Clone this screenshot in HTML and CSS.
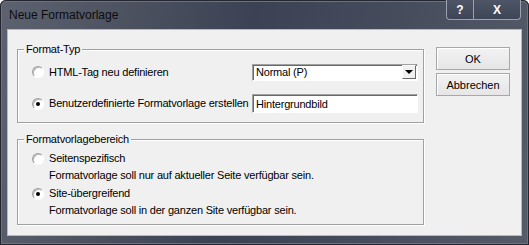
FILE: index.html
```html
<!DOCTYPE html>
<html lang="de">
<head>
  <meta charset="UTF-8">
  <title>Neue Formatvorlage</title>
  <link rel="stylesheet" href="styles.css">
</head>
<body>
  <div class="window">
    <div class="titlebar">
      <span class="title">Neue Formatvorlage</span>
      <div class="caption-btns">
        <span class="cap help">?</span>
        <span class="cap close">X</span>
      </div>
    </div>

    <div class="client">
      <div class="groups">
        <fieldset class="group">
          <legend>Format-Typ</legend>
          <div class="body type">
            <div class="row first">
              <label class="opt"><span class="radio"></span>HTML-Tag neu definieren</label>
              <div class="select"><span>Normal (P)</span><span class="arrow"></span></div>
            </div>
            <div class="row second">
              <label class="opt"><span class="radio checked"></span>Benutzerdefinierte Formatvorlage erstellen</label>
              <div class="textbox">Hintergrundbild</div>
            </div>
          </div>
        </fieldset>

        <fieldset class="group scope">
          <legend>Formatvorlagebereich</legend>
          <div class="body">
            <div class="choice">
              <label class="opt"><span class="radio"></span>Seitenspezifisch</label>
              <div class="desc">Formatvorlage soll nur auf aktueller Seite verfügbar sein.</div>
            </div>
            <div class="choice">
              <label class="opt"><span class="radio checked"></span>Site-übergreifend</label>
              <div class="desc">Formatvorlage soll in der ganzen Site verfügbar sein.</div>
            </div>
          </div>
        </fieldset>
      </div>

      <div class="buttons">
        <button class="btn">OK</button>
        <button class="btn">Abbrechen</button>
      </div>
    </div>
  </div>
</body>
</html>
```

FILE: styles.css
```css
body { margin: 0; font-family: "Liberation Sans", Arial, sans-serif; font-size: 11px; color: #000; overflow: hidden; }

.window { width: 529px; height: 245px; box-sizing: border-box; padding: 0 7px 9px 7px; display: flex; flex-direction: column;
  background: linear-gradient(100deg, #5d6270 0%, #4a505e 25%, #3a4254 45%, #454c5c 70%, #555b68 100%);
  box-shadow: inset 0 0 0 1px #23262e, inset 0 0 0 2px #6c727e; border-radius: 6px 6px 0 0; }

.titlebar { height: 29px; display: flex; justify-content: space-between; align-items: flex-start; }
.title { font-size: 12px; line-height: 14px; margin: 8px 0 0 2px; color: #0c0c0c; }
.caption-btns { display: flex; margin-right: 1px; }
.cap { height: 20px; box-sizing: border-box; display: flex; align-items: center; justify-content: center;
  color: #fff; font-weight: bold; font-size: 12px; border: 1px solid #9aa0ac; border-top: 0;
  background: linear-gradient(#4e5566, #3e4556); }
.help { width: 28px; border-radius: 0 0 0 4px; }
.close { width: 47px; border-left: 0; border-radius: 0 0 4px 0; }

.client { flex: 1; background: #f0f0f0; border: 1px solid #b4b9c2; display: flex; align-items: flex-start; padding: 13px 0 0 9px; letter-spacing: -0.2px; }

.groups { width: 407px; }
.group { margin: 0; padding: 0; min-width: 0; border: 1px solid #a0a0a0; box-shadow: inset 1px 1px 0 #fff, 1px 1px 0 #fff; }
.group legend { margin-left: 6px; padding: 0 2px; line-height: 13px; background: #f0f0f0; }
.scope { margin-top: 10px; }

.body { padding: 4px 5px 5px 14px; }
.body.type { padding: 6px 5px 8px 14px; }

.row { display: flex; align-items: center; justify-content: space-between; }
.row.first { height: 20px; }
.row.second { height: 21px; margin-top: 11px; }

.opt { display: flex; align-items: center; gap: 5px; line-height: 17px; white-space: nowrap; }
.radio { width: 12px; height: 12px; box-sizing: border-box; border-radius: 50%; position: relative; flex: none;
  border: 1px solid; border-color: #a0a0a0 #fff #fff #a0a0a0; background: #fff; box-shadow: inset 1px 1px 0 #b8b8b8; }
.radio.checked::after { content: ""; position: absolute; left: 3px; top: 3px; width: 4px; height: 4px; border-radius: 50%; background: #000; }

.desc { padding-left: 17px; line-height: 17px; }
.choice + .choice { margin-top: 1px; }

.select, .textbox { width: 166px; box-sizing: border-box; background: #fff; border: 1px solid; border-color: #a0a0a0 #fff #fff #a0a0a0;
  box-shadow: inset 1px 1px 0 #696969; padding-left: 3px; display: flex; align-items: center; justify-content: space-between; }
.select { height: 17px; padding-right: 1px; }
.textbox { height: 19px; }
.arrow { width: 14px; height: 14px; box-sizing: border-box; background: #f0f0f0; border: 1px solid; border-color: #fff #696969 #696969 #fff; position: relative; }
.arrow::after { content: ""; position: absolute; left: 2px; top: 4px; border-left: 4px solid transparent; border-right: 4px solid transparent; border-top: 4px solid #000; }

.buttons { margin: 4px 0 0 12px; display: flex; flex-direction: column; gap: 3px; }
.btn { width: 74px; height: 23px; font: inherit; color: #000; padding: 0; background: linear-gradient(#f2f2f2, #e6e6e6);
  border: 1px solid #a8a8a8; box-shadow: inset 1px 1px 0 #fff; }
```
